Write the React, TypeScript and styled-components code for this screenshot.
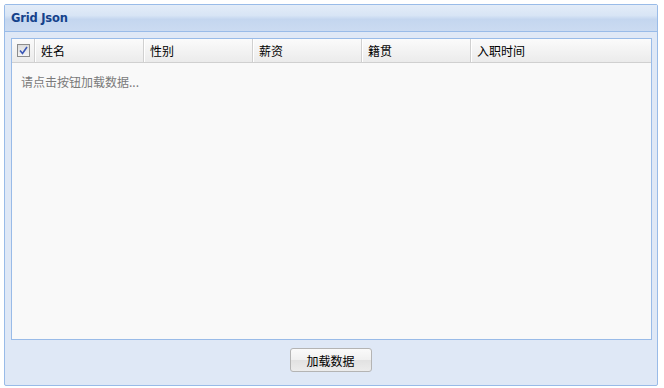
import React from "react";
import styled, { createGlobalStyle } from "styled-components";

const Global = createGlobalStyle`
  html, body { margin: 0; padding: 0; background: #ffffff; }
  body { font-family: Tahoma, "DejaVu Sans", "Noto Sans CJK SC", sans-serif; font-size: 12px; }
`;

const Page = styled.div`
  padding: 4px 7px 2px 4px;
`;

const Panel = styled.div`
  width: 654px;
  height: 382px;
  box-sizing: border-box;
  border: 1px solid #99bbe8;
  border-radius: 2px;
  background: #dfe8f6;
  display: flex;
  flex-direction: column;
`;

const Header = styled.div`
  height: 26px;
  border-bottom: 1px solid #99bbe8;
  background: linear-gradient(#e3ecf8 0%, #d8e5f5 40%, #c4d6ef 55%, #cbdbf1 100%);
  display: flex;
  align-items: center;
  padding-left: 6px;
`;

const Title = styled.span`
  font-family: "DejaVu Sans", Tahoma, sans-serif;
  font-weight: bold;
  font-size: 11.5px;
  color: #15428b;
  letter-spacing: -0.2px;
`;

const Body = styled.div`
  flex: 1;
  display: flex;
  flex-direction: column;
  padding: 6px 5px 0 6px;
`;

const Grid = styled.div`
  height: 300px;
  border: 1px solid #99bbe8;
  background: #f9f9f9;
  display: flex;
  flex-direction: column;
`;

const HeadRow = styled.div`
  display: flex;
  height: 23px;
  background: linear-gradient(#fbfbfb 0%, #f3f3f3 50%, #ebebeb 100%);
  border-bottom: 1px solid #d0d0d0;
`;

const HeadCell = styled.div<{ $w: number }>`
  width: ${(p) => p.$w}px;
  flex: none;
  box-sizing: border-box;
  border-right: 1px solid #d0d0d0;
  box-shadow: inset 1px 0 0 #ffffff;
  display: flex;
  align-items: center;
  padding-left: 6px;
  font-family: "Noto Sans CJK SC", sans-serif;
  font-size: 12px;
  color: #000;
  &:last-child { border-right: none; flex: 1; }
`;

const CheckCell = styled.div`
  width: 23px;
  flex: none;
  box-sizing: border-box;
  border-right: 1px solid #d0d0d0;
  display: flex;
  align-items: center;
  justify-content: center;
`;

const Box = styled.div`
  width: 13px;
  height: 13px;
  box-sizing: border-box;
  border: 1px solid #8c8c8c;
  background: linear-gradient(#dcdcdc, #f4f4f4);
  display: flex;
  align-items: center;
  justify-content: center;
`;

const Empty = styled.div`
  padding: 10px 0 0 9px;
  font-family: "Noto Sans CJK SC", sans-serif;
  font-size: 12px;
  color: #7a7a7a;
`;

const Footer = styled.div`
  flex: 1;
  display: flex;
  justify-content: center;
  align-items: flex-start;
  padding-top: 8px;
`;

const Button = styled.button`
  width: 82px;
  height: 24px;
  margin-right: 2px;
  border: 1px solid #b4b4b4;
  border-radius: 3px;
  background: linear-gradient(#fafafa 0%, #f0f0f0 50%, #e2e2e2 52%, #ececec 100%);
  font-family: "Noto Sans CJK SC", sans-serif;
  font-size: 12px;
  color: #000;
  padding: 0;
`;

const cols = ["姓名", "性别", "薪资", "籍贯", "入职时间"];

export default function App() {
  return (
    <>
      <Global />
      <Page>
        <Panel>
          <Header>
            <Title>Grid Json</Title>
          </Header>
          <Body>
            <Grid>
              <HeadRow>
                <CheckCell>
                  <Box>
                    <svg width="9" height="9" viewBox="0 0 9 9">
                      <path d="M1 4.5 L3.5 7.5 L8 1" fill="none" stroke="#3a57b6" strokeWidth="1.6" />
                    </svg>
                  </Box>
                </CheckCell>
                {cols.map((c) => (
                  <HeadCell key={c} $w={109}>{c}</HeadCell>
                ))}
              </HeadRow>
              <Empty>请点击按钮加载数据...</Empty>
            </Grid>
            <Footer>
              <Button>加载数据</Button>
            </Footer>
          </Body>
        </Panel>
      </Page>
    </>
  );
}
